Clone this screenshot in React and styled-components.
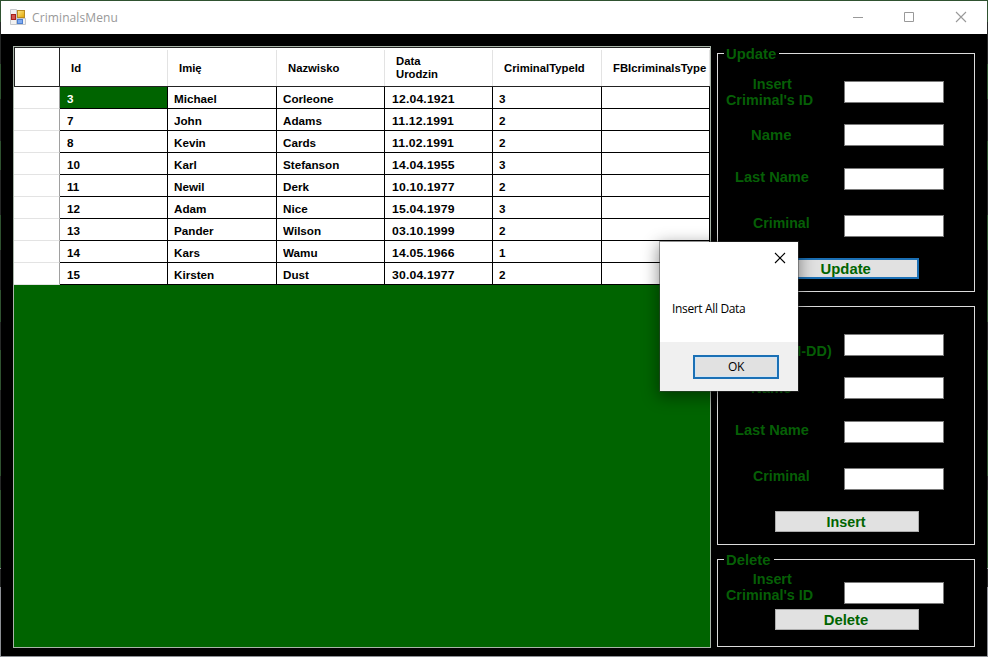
import React from 'react';
import styled, { createGlobalStyle } from 'styled-components';

const Global = createGlobalStyle`
  html, body { margin: 0; background: #000; }
  * { box-sizing: border-box; }
`;

const Window = styled.div`
  position: relative;
  width: 988px;
  height: 657px;
  padding: 1px;
  overflow: hidden;
  background: linear-gradient(#2f5230 0 22px, #262827 22px 64px, #2f5230 64px 99px, #262827 99px 141px, #2f5230 141px 170px, #262827 170px 215px, #2f5230 215px 250px, #262827 250px 290px, #2f5230 290px 322px, #262827 322px 350px, #2f5230 350px 390px, #262827 390px 430px, #2f5230 430px 476px, #262827 476px 490px, #2f5230 490px 568px, #8c8f94 568px 569px, #262827 569px 587px, #8c8f94 587px);
  font-family: "Liberation Sans", Arial, sans-serif;
`;

const TitleBar = styled.header`
  display: flex;
  align-items: center;
  height: 33px;
  padding: 0 0 1px 9px;
  background: #fff;
`;

const Title = styled.h1`
  flex: 1;
  margin: 0 0 0 6px;
  font: 400 12px "Open Sans", sans-serif;
  letter-spacing: 0.1px;
  color: #999;
`;

const Caption = styled.span`
  display: flex;
  justify-content: center;
  width: 51px;
  margin: 0 ${(p) => p.$gap || 0}px;
`;

const Body = styled.main`
  display: flex;
  align-items: flex-start;
  gap: 6px;
  height: 622px;
  padding: 12px 0 0 12px;
  background: #000;
`;

const DataGrid = styled.div`
  width: 698px;
  height: 602px;
  border: 1px solid #a9b5a9;
  background: #006400;
  font-weight: 700;
  font-size: 10.5px;
  color: #000;
`;

const GridRow = styled.div`
  display: grid;
  grid-template-columns: 46px 108px 109px 108px 108px 109px 108px;
  grid-template-rows: 100%;
  height: 22px;
`;

const HeadRow = styled(GridRow)`
  height: 40px;
  border-top: 1px solid #222;
  border-bottom: 1px solid #222;
  background: #fff;
`;

const WideText = styled.span`
  display: inline-block;
  transform: scaleX(${(p) => p.$scale || 1.11});
  transform-origin: ${(p) => (p.$center ? 'center' : 'left')};
  letter-spacing: ${(p) => p.$spacing || 0}px;
`;

const HeadCell = styled.div`
  display: flex;
  align-items: center;
  padding: 2px 0 0 10.5px;
  line-height: 13px;
  white-space: nowrap;
  overflow: hidden;
  background: linear-gradient(#e3e3e3, #e3e3e3) right 2px / 1px 100% no-repeat;
`;

const HeadCorner = styled.div`
  border-left: 1px solid #222;
  border-right: 1px solid #222;
`;

const RowHeader = styled.div`
  border-right: 1px solid #a0a0a0;
  border-bottom: 1px solid #e3e3e3;
  background: #fff;
`;

const Cell = styled.div`
  padding: 2px 0 0 ${(p) => (p.$indent ? 7 : 6)}px;
  line-height: 21px;
  border-right: 1px solid #000;
  border-bottom: 1px solid #000;
  background: ${(p) => (p.$selected ? '#006400' : '#fff')};
  color: ${(p) => (p.$selected ? '#fff' : '#000')};
  white-space: nowrap;
`;

const Side = styled.aside`
  display: flex;
  flex-direction: column;
  gap: 14px;
  width: 258px;
`;

const Group = styled.section`
  display: flex;
  flex-direction: column;
  height: ${(p) => p.$height}px;
  margin-top: ${(p) => p.$top || 0}px;
  border: 1px solid #dcdcdc;
  font-weight: 700;
  font-size: 14px;
  color: #065f06;
`;

const Legend = styled.h2`
  align-self: flex-start;
  height: 16px;
  margin: -8px 0 0 6px;
  padding: 0 6px 0 2px;
  background: #000;
  font: inherit;
  line-height: 16px;
`;

const Field = styled.label`
  display: grid;
  grid-template-columns: 126px 100px;
  height: 22px;
  margin-top: ${(p) => p.$top}px;
`;

const FieldText = styled.span`
  margin-top: ${(p) => p.$shift}px;
  padding-left: ${(p) => p.$left}px;
  line-height: 16px;
  white-space: nowrap;
  height: 16px;
`;

const FirstLine = styled.span`
  display: block;
  padding-left: 26px;
`;

const TextBox = styled.input`
  width: 100px;
  height: 22px;
  padding: 0 3px;
  border: 1px solid #7a7a7a;
  border-radius: 0;
  background: #fff;
  outline: none;
`;

const Button = styled.button`
  width: 144px;
  height: 21px;
  margin: ${(p) => p.$top}px 0 0 57px;
  padding: ${(p) => (p.$focused ? '1px 2px 0 0' : '1px 1px 0 0')};
  border: ${(p) => (p.$focused ? '2px solid #1b70b5' : '1px solid #adadad')};
  background: #e1e1e1;
  color: #006400;
  font: 700 14px/17px "Liberation Sans", Arial, sans-serif;
`;

const Dialog = styled.div`
  position: absolute;
  left: 660px;
  top: 242px;
  display: flex;
  flex-direction: column;
  width: 138px;
  height: 149px;
  background: #fff;
  box-shadow: 0 0 0 1px rgba(60, 60, 60, 0.45), 0 4px 15px 2px rgba(0, 0, 0, 0.42);
  font: 400 12px/16px "Open Sans", sans-serif;
  color: #000;
`;

const DialogTop = styled.div`
  display: flex;
  justify-content: flex-end;
  height: 59px;
  padding: 10px 12px 0 0;
`;

const Message = styled.p`
  flex: 1;
  margin: 0;
  padding-left: 12px;
  letter-spacing: -0.35px;
  white-space: nowrap;
`;

const DialogFooter = styled.div`
  display: flex;
  justify-content: flex-end;
  height: 49px;
  padding: 13px 19px 0 0;
  background: #f0f0f0;
`;

const OkButton = styled.button`
  width: 86px;
  height: 24px;
  padding: 0;
  border: 2px solid #1b70b5;
  box-shadow: inset 0 0 0 1px #cfe4f5;
  background: #e1e1e1;
  font: 400 12px/18px "Open Sans", sans-serif;
  letter-spacing: -0.3px;
  color: #000;
`;

const AppIcon = () => (
  <svg width="16" height="16" viewBox="0 0 16 16">
    <defs>
      <linearGradient id="gold" x1="0" y1="0" x2="1" y2="1">
        <stop offset="0" stopColor="#ffe88a" />
        <stop offset="1" stopColor="#e0a500" />
      </linearGradient>
    </defs>
    <path d="M0.5 .5H6.5V15.5H.5ZM6.5 9.5H15.5V15.5H6.5Z" fill="#f1f1f1" stroke="#c5c8cc" />
    <rect x="7.5" y="1.5" width="7" height="7" fill="url(#gold)" stroke="#b88a20" />
    <rect x="1.5" y="5.5" width="4" height="5" fill="#d0564e" stroke="#a8201c" />
    <rect x="7.5" y="10.5" width="5" height="4" fill="#7faaf0" stroke="#4c7fd0" />
  </svg>
);

const CloseIcon = ({ color }) => (
  <svg width="12" height="12" viewBox="0 0 12 12">
    <path d="M1 1L11 11M11 1L1 11" stroke={color} strokeWidth="1.1" fill="none" />
  </svg>
);

const columns = ['Id', 'Imię', 'Nazwisko', <>Data<br />Urodzin</>, 'CriminalTypeId', 'FBIcriminalsType'];

const rows = [
  ['3', 'Michael', 'Corleone', '12.04.1921', '3', ''],
  ['7', 'John', 'Adams', '11.12.1991', '2', ''],
  ['8', 'Kevin', 'Cards', '11.02.1991', '2', ''],
  ['10', 'Karl', 'Stefanson', '14.04.1955', '3', ''],
  ['11', 'Newil', 'Derk', '10.10.1977', '2', ''],
  ['12', 'Adam', 'Nice', '15.04.1979', '3', ''],
  ['13', 'Pander', 'Wilson', '03.10.1999', '2', ''],
  ['14', 'Kars', 'Wamu', '14.05.1966', '1', ''],
  ['15', 'Kirsten', 'Dust', '30.04.1977', '2', ''],
];

const Entry = ({ text, top, shift, left, scale }) => (
  <Field $top={top}>
    <FieldText $shift={shift} $left={left}><WideText $scale={scale}>{text}</WideText></FieldText>
    <TextBox />
  </Field>
);

const idLabel = <><FirstLine>Insert</FirstLine>Criminal's ID</>;

const PersonFields = () => (
  <>
    <Entry text="Name" top={21} shift={3} left={33} scale={1.06} />
    <Entry text="Last Name" top={22} shift={1} left={17} scale={1.045} />
    <Entry text="Criminal" top={25} shift={0} left={35} scale={1.01} />
  </>
);

export default function App() {
  return (
    <Window>
      <Global />
      <TitleBar>
        <AppIcon />
        <Title>CriminalsMenu</Title>
        <Caption>
          <svg width="10" height="11"><path d="M0 5.5H10" stroke="#999" /></svg>
        </Caption>
        <Caption>
          <svg width="10" height="10"><path d="M.5 .5H9.5V9.5H.5Z" stroke="#999" fill="none" /></svg>
        </Caption>
        <Caption $gap={1}><CloseIcon color="#999" /></Caption>
      </TitleBar>
      <Body>
        <DataGrid>
          <HeadRow>
            <HeadCorner />
            {columns.map((c, i) => <HeadCell key={i}><WideText $scale={1.075}>{c}</WideText></HeadCell>)}
          </HeadRow>
          {rows.map((row, r) => (
            <GridRow key={r}>
              <RowHeader />
              {row.map((v, c) => (
                <Cell key={c} $selected={r === 0 && c === 0} $indent={c === 0 || c === 3}>
                  <WideText $scale={c === 3 ? 1.16 : 1.11} $spacing={c === 3 ? 0.15 : 0}>{v}</WideText>
                </Cell>
              ))}
            </GridRow>
          ))}
        </DataGrid>
        <Side>
          <Group $height={239} $top={7}>
            <Legend><WideText $scale={1.06}>Update</WideText></Legend>
            <Entry text={idLabel} top={19} shift={-5} left={8} scale={1.025} />
            <PersonFields />
            <Button $top={21} $focused><WideText $center $scale={1.06}>Update</WideText></Button>
          </Group>
          <Group $height={239}>
            <Legend />
            <Entry text="(YYYY-MM-DD)" top={19} shift={9} left={12} scale={1.03} />
            <PersonFields />
            <Button $top={21}><WideText $center $scale={1.02}>Insert</WideText></Button>
          </Group>
          <Group $height={88}>
            <Legend><WideText $scale={1.06}>Delete</WideText></Legend>
            <Entry text={idLabel} top={14} shift={-11} left={8} scale={1.025} />
            <Button $top={5}><WideText $center $scale={1.06}>Delete</WideText></Button>
          </Group>
        </Side>
      </Body>
      <Dialog role="dialog">
        <DialogTop><CloseIcon color="#000" /></DialogTop>
        <Message>Insert All Data</Message>
        <DialogFooter><OkButton>OK</OkButton></DialogFooter>
      </Dialog>
    </Window>
  );
}
